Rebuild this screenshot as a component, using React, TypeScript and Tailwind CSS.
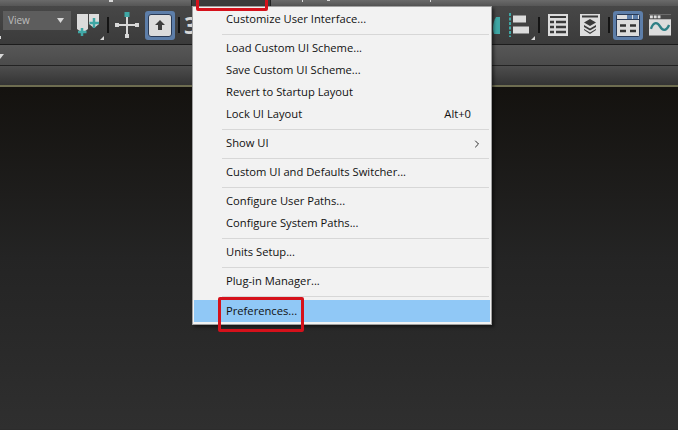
import React from 'react';
import { ChevronRight } from 'lucide-react';

type MenuRow = { label?: string; shortcut?: string; submenu?: boolean; active?: boolean; sep?: boolean };

const rows: MenuRow[] = [
  { label: 'Customize User Interface...' },
  { sep: true },
  { label: 'Load Custom UI Scheme...' },
  { label: 'Save Custom UI Scheme...' },
  { label: 'Revert to Startup Layout' },
  { label: 'Lock UI Layout', shortcut: 'Alt+0' },
  { sep: true },
  { label: 'Show UI', submenu: true },
  { sep: true },
  { label: 'Custom UI and Defaults Switcher...' },
  { sep: true },
  { label: 'Configure User Paths...' },
  { label: 'Configure System Paths...' },
  { sep: true },
  { label: 'Units Setup...' },
  { sep: true },
  { label: 'Plug-in Manager...' },
  { sep: true },
  { label: 'Preferences...', active: true },
];

const CornerMark = () => (
  <svg width="4" height="4" viewBox="0 0 4 4" className="absolute right-0 bottom-[4px]">
    <path d="M4 0V4H0Z" fill="#d8d8d8" />
  </svg>
);

const Divider = () => <div className="w-[2px] h-[16px] bg-[#141414]" />;

const LinkIcon = () => (
  <div className="relative w-[27px] h-[38px]">
    <svg width="27" height="38" viewBox="0 0 27 38">
      <path d="M0 8H11V23L5.500 27L0 23Z" fill="#dcdcdc" />
      <path d="M12 8H22V18L17 22L12 18Z" fill="#dcdcdc" />
      <path d="M5 22V30M1 26H9.500" stroke="#3fa7a5" strokeWidth="2.500" />
      <path d="M17 12V22M12.500 17H22" stroke="#3fa7a5" strokeWidth="2.500" />
    </svg>
    <CornerMark />
  </div>
);

const MoveIcon = () => (
  <svg width="24" height="26" viewBox="0 0 24 26">
    <path d="M12 4V25M1 13H23" stroke="#d8d8d8" strokeWidth="2" />
    <rect x="9.500" y="0" width="5" height="5" fill="#3fa7a5" />
    <rect x="0" y="11" width="4" height="4" fill="#d8d8d8" />
    <rect x="20" y="11" width="4" height="4" fill="#d8d8d8" />
    <rect x="10" y="22" width="4" height="4" fill="#d8d8d8" />
  </svg>
);

const ActiveButton = ({ children }: { children: React.ReactNode }) => (
  <div className="w-[30px] h-[29px] rounded-[3px] bg-[#5d7ea9] flex items-center justify-center">
    {children}
  </div>
);

const SelectIcon = () => (
  <div className="w-[24px] h-[23px] rounded-[3px] border border-[#2a3a55] bg-[#dcdcdc] flex items-center justify-center">
    <svg width="12" height="12" viewBox="0 0 12 12">
      <path d="M6 1L11 6H8V11H4V6H1Z" fill="#3c3c3c" />
    </svg>
  </div>
);

const AlignIcon = () => (
  <div className="relative w-[26px] h-[38px] flex items-center">
    <svg width="26" height="26" viewBox="0 0 26 26">
      <path d="M1 1V25" stroke="#3fa7a5" strokeWidth="2" strokeDasharray="3 1.500" />
      <rect x="4" y="3.500" width="13" height="7" fill="#dcdcdc" />
      <rect x="4" y="14.500" width="16" height="7" fill="#dcdcdc" />
    </svg>
    <CornerMark />
  </div>
);

const TableIcon = () => (
  <svg width="20" height="22" viewBox="0 0 20 22">
    <rect width="20" height="22" fill="#dcdcdc" />
    <path d="M2 3H18" stroke="#3a3a3a" strokeWidth="2" />
    <path d="M2 8H6M8 8H18M2 13H6M8 13H18M2 18H6M8 18H18" stroke="#3a3a3a" strokeWidth="2.500" />
  </svg>
);

const LayersIcon = () => (
  <svg width="20" height="22" viewBox="0 0 20 22">
    <rect width="20" height="22" fill="#dcdcdc" />
    <path d="M2 2.500H18" stroke="#3a3a3a" strokeWidth="2" />
    <path d="M10 5L16 8.500L10 12L4 8.500Z" fill="#3a3a3a" />
    <path d="M4 11L10 14.500L16 11V13L10 16.500L4 13Z" fill="#3a3a3a" />
    <path d="M4 15L10 18.500L16 15V16L10 20L4 16Z" fill="#3a3a3a" />
  </svg>
);

const SchematicIcon = () => (
  <svg width="24" height="23" viewBox="0 0 24 23">
    <rect x="0.500" y="0.500" width="23" height="22" rx="1" fill="#dcdcdc" stroke="#2a3a55" />
    <rect x="11" y="1" width="5" height="4" fill="#5d7ea9" />
    <rect x="17" y="1" width="5" height="4" fill="#5d7ea9" />
    <path d="M1 5.500H23" stroke="#2a3a55" />
    <path d="M4 11.500H10M14 11.500H20M4 17H10M14 17H20" stroke="#333" strokeWidth="2.500" />
  </svg>
);

const CurveIcon = () => (
  <svg width="22" height="22" viewBox="0 0 23 22">
    <rect width="23" height="22" fill="#dcdcdc" />
    <rect width="23" height="5" fill="#484848" />
    <rect x="1" y="1" width="3" height="3" fill="#dcdcdc" />
    <rect x="5" y="1" width="3" height="3" fill="#dcdcdc" />
    <rect x="9" y="1" width="3" height="3" fill="#dcdcdc" />
    <path d="M2 15C5 7 9 8 11.500 12.500C14 17 18 18 21 11" fill="none" stroke="#2e7f85" strokeWidth="2.500" />
  </svg>
);

const MenuList = () => (
  <div className="absolute left-[192px] top-[6px] w-[300px] h-[319px] bg-[#f2f2f2] border border-[#a0a0a0] shadow-[2px_2px_3px_rgba(0,0,0,0.5)] pt-[1px] px-[1px] text-[11.2px] text-[#111111]">
    {rows.map((row, idx) =>
      row.sep ? (
        <div key={idx} className="h-[7px] pt-[4px] pl-[28px] pr-[1px]">
          <div className="h-px bg-[#d7d7d7]" />
        </div>
      ) : (
        <div
          key={idx}
          className={`h-[22px] flex items-center pl-[32px] pr-[19px] pt-[1px] ${row.active ? 'bg-[#90c8f6] mt-[1px]' : ''}`}
        >
          <span className="flex-1">{row.label}</span>
          {row.shortcut && <span>{row.shortcut}</span>}
          {row.submenu && <ChevronRight size={12} strokeWidth={1.75} className="-mr-[12px]" />}
        </div>
      ),
    )}
  </div>
);

export default function App() {
  return (
    <div
      className="relative w-[678px] h-[430px] overflow-hidden bg-[#2c2c2c]"
      style={{ fontFamily: '"Open Sans", "Noto Sans", sans-serif' }}
    >
      {/* menu strip, cut off at the top */}
      <div className="relative h-[6px] bg-gradient-to-b from-[#6a6a6a] to-[#565656]">
        <div className="absolute left-[191px] top-0 w-[80px] h-[6px] bg-[#3c3c3c] border-x border-[#222]" />
        <div className="absolute left-[109px] top-0 w-[4px] h-[2px] bg-[#d8d8d8]" />
        <div className="absolute left-[302px] top-0 w-px h-[2px] bg-[#d8d8d8]" />
        <div className="absolute left-[327px] top-0 w-[3px] h-px bg-[#d8d8d8]" />
        <div className="absolute left-[430px] top-0 w-px h-[2px] bg-[#d8d8d8]" />
      </div>

      {/* main toolbar */}
      <div className="relative h-[39px] flex items-center justify-between pl-[3px] pr-[7px] bg-gradient-to-b from-[#474747] to-[#3b3b3b] border-b border-[#1c1c1c]">
        <div className="absolute left-0 top-[30px] w-[1px] h-[3px] bg-[#d8d8d8]" />
        <div className="flex items-center">
          <div className="w-[68px] h-[19px] -mt-[10px] bg-[#5d5d5d] flex items-center justify-between pl-[5px] pr-[7px] text-[10px] text-[#bdbdbd]">
            <span>View</span>
            <svg width="7" height="5" viewBox="0 0 7 5">
              <path d="M0 0H7L3.500 5Z" fill="#d8d8d8" />
            </svg>
          </div>
          <div className="ml-[6px]"><LinkIcon /></div>
          <div className="ml-[3px]"><Divider /></div>
          <div className="ml-[6px]"><MoveIcon /></div>
          <div className="ml-[6px]">
            <ActiveButton>
              <SelectIcon />
            </ActiveButton>
          </div>
          <div className="ml-[3px]"><Divider /></div>
          <span className="ml-[4px] text-[24px] font-bold text-[#d8d8d8]">3</span>
        </div>
        <div className="flex items-center">
          <svg width="7" height="17" viewBox="0 0 7 17" className="mr-[9px]">
            <path d="M3 0H7V17H1C-1 12 0 5 3 0Z" fill="#3fa7a5" />
          </svg>
          <AlignIcon />
          <div className="ml-[3px]"><Divider /></div>
          <div className="ml-[8px]"><TableIcon /></div>
          <div className="ml-[12px]"><LayersIcon /></div>
          <div className="ml-[8px]"><Divider /></div>
          <div className="ml-[3px]">
            <ActiveButton>
              <SchematicIcon />
            </ActiveButton>
          </div>
          <div className="ml-[6px]"><CurveIcon /></div>
        </div>
      </div>

      {/* ribbon rows */}
      <div className="relative h-[21px] bg-gradient-to-b from-[#575757] to-[#4b4b4b] border-b border-[#232323]">
        <svg width="4" height="5" viewBox="0 0 4 5" className="absolute left-0 top-[9px]">
          <path d="M0 0H4L0 5Z" fill="#d8d8d8" />
        </svg>
      </div>
      <div className="h-[19px] bg-gradient-to-b from-[#4e4e4e] to-[#343434]" />
      <div className="h-[2px] bg-[#6e6d50]" />

      {/* viewport */}
      <div className="h-[342px] bg-gradient-to-b from-[#14120f] via-[#242424] to-[#2f2f2f]" />

      <MenuList />

      {/* annotation boxes */}
      <div className="absolute left-[196px] -top-[4px] w-[72px] h-[15px] rounded-[2px] border-[3px] border-[#d5111b]" />
      <div className="absolute left-[218px] top-[297px] w-[86px] h-[35px] rounded-[2px] border-[3px] border-[#d5111b]" />
    </div>
  );
}
